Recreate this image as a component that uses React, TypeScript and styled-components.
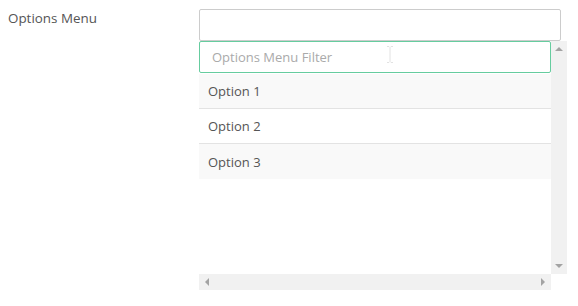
import styled, { createGlobalStyle } from "styled-components";

const Global = createGlobalStyle`
  html, body {
    margin: 0;
    background: #fff;
    font-family: "Open Sans", "Liberation Sans", sans-serif;
  }
`;

const Row = styled.div`
  display: flex;
  padding: 9px 8px;
`;

const Label = styled.div`
  width: 191px;
  font-size: 13.4px;
  line-height: 19px;
  color: #555;
`;

const Field = styled.div`
  display: flex;
  flex-direction: column;
  width: 362px;
`;

const Select = styled.div`
  box-sizing: border-box;
  height: 32px;
  border: 1px solid #ccc;
  border-radius: 2px;
  background: #fff;
`;

const Panel = styled.div`
  display: grid;
  grid-template-columns: 352px 16px;
  grid-template-rows: 233px 16px;
  width: 368px;
`;

const Content = styled.div`
  display: flex;
  flex-direction: column;
  background: #fff;
  overflow: hidden;
`;

const FilterWrap = styled.div`
  position: relative;
  padding-bottom: 1px;
`;

const Filter = styled.input`
  display: block;
  box-sizing: border-box;
  width: 100%;
  height: 32px;
  border: 1px solid #66cc9f;
  border-radius: 2px;
  padding: 0 12px;
  font-family: inherit;
  font-size: 13px;
  color: #555;
  outline: none;
  &::placeholder {
    color: #aaa;
  }
`;

const Caret = styled.svg`
  position: absolute;
  left: 187px;
  top: 5px;
`;

const Option = styled.div<{ $alt?: boolean; $last?: boolean }>`
  box-sizing: border-box;
  height: 35px;
  display: flex;
  align-items: center;
  padding-left: 9px;
  font-size: 13px;
  color: #555;
  background: ${(p) => (p.$alt ? "#f9f9f9" : "#fff")};
  border-bottom: ${(p) => (p.$last ? "none" : "1px solid #e3e3e3")};
`;

const Track = styled.div<{ $dir: "v" | "h" }>`
  background: #f1f1f1;
  display: flex;
  flex-direction: ${(p) => (p.$dir === "v" ? "column" : "row")};
  justify-content: space-between;
  align-items: center;
  padding: ${(p) => (p.$dir === "v" ? "6px 0" : "0 6px")};
`;

const Corner = styled.div`
  background: #fff;
`;

const Arrow = styled.span<{ $side: "up" | "down" | "left" | "right" }>`
  width: 0;
  height: 0;
  border-style: solid;
  border-color: transparent;
  ${(p) =>
    p.$side === "up"
      ? "border-width: 0 4px 4px 4px; border-bottom-color: #a3a3a3;"
      : p.$side === "down"
      ? "border-width: 4px 4px 0 4px; border-top-color: #a3a3a3;"
      : p.$side === "left"
      ? "border-width: 4px 4px 4px 0; border-right-color: #a3a3a3;"
      : "border-width: 4px 0 4px 4px; border-left-color: #a3a3a3;"}
`;

const options = ["Option 1", "Option 2", "Option 3"];

export default function App() {
  return (
    <>
      <Global />
      <Row>
        <Label>Options Menu</Label>
        <Field>
          <Select />
          <Panel>
            <Content>
              <FilterWrap>
                <Filter placeholder="Options Menu Filter" />
                <Caret width="8" height="17" viewBox="0 0 8 17">
                  <path
                    d="M1 0.5h2.2M4.8 0.5H7M4 1v15M1 16.5h2.2M4.8 16.5H7"
                    stroke="#e2e2e2"
                    strokeWidth="1"
                    fill="none"
                  />
                </Caret>
              </FilterWrap>
              {options.map((o, i) => (
                <Option key={o} $alt={i % 2 === 0} $last={i === options.length - 1}>
                  {o}
                </Option>
              ))}
            </Content>
            <Track $dir="v">
              <Arrow $side="up" />
              <Arrow $side="down" />
            </Track>
            <Track $dir="h">
              <Arrow $side="left" />
              <Arrow $side="right" />
            </Track>
            <Corner />
          </Panel>
        </Field>
      </Row>
    </>
  );
}
